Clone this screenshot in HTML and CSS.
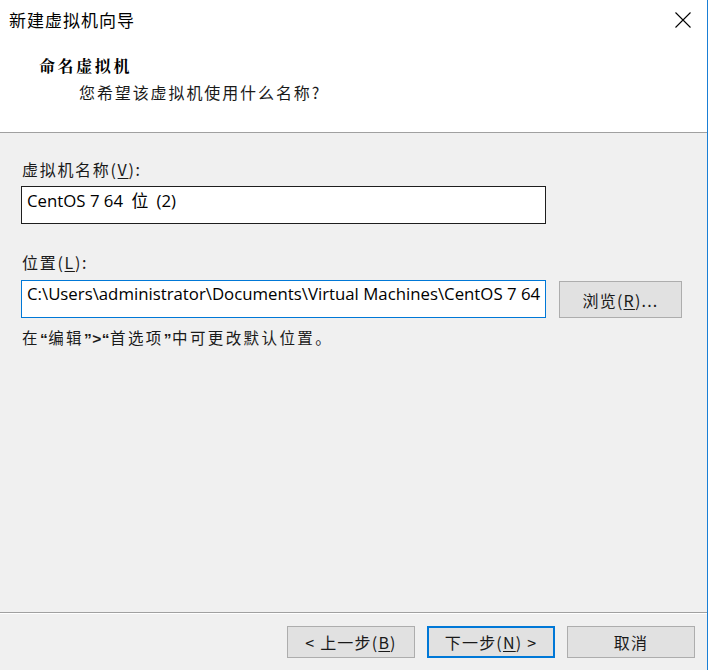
FILE: index.html
```html
<!DOCTYPE html>
<html lang="zh-CN">
<head>
<meta charset="utf-8">
<title>新建虚拟机向导</title>
<link rel="stylesheet" href="styles.css">
</head>
<body>
<div class="window">
  <div class="header">
    <div class="titlebar">
      <span class="title">新建虚拟机向导</span>
      <span class="close">
        <svg width="16" height="16" viewBox="0 0 16 16"><path d="M0.5 0.5 L15.5 15.5 M15.5 0.5 L0.5 15.5" stroke="#000" stroke-width="1.1" fill="none"/></svg>
      </span>
    </div>
    <div class="heading">命名虚拟机</div>
    <div class="subheading">您希望该虚拟机使用什么名称?</div>
  </div>
  <div class="content">
    <div class="label">虚拟机名称(<u>V</u>):</div>
    <div class="field">CentOS 7 64 <span class="cjk">位</span> (2)</div>
    <div class="label label2">位置(<u>L</u>):</div>
    <div class="row">
      <div class="field focus">C:\Users\administrator\Documents\Virtual Machines\CentOS 7 64</div>
      <div class="btn browse">浏览(<u>R</u>)...</div>
    </div>
    <div class="hint">在<span class="q">“</span>编辑<span class="q">”&gt;“</span>首选项<span class="q">”</span>中可更改默认位置。</div>
  </div>
  <div class="footer">
    <div class="btn nav">&lt; 上一步(<u>B</u>)</div>
    <div class="btn nav primary">下一步(<u>N</u>) &gt;</div>
    <div class="btn nav">取消</div>
  </div>
</div>
</body>
</html>
```
FILE: styles.css
```css
html, body {
  margin: 0;
  padding: 0;
  background: #ffffff;
}
body {
  width: 709px;
  height: 670px;
  overflow: hidden;
  font-family: "Noto Sans CJK SC", "Noto Sans", sans-serif;
  color: #000;
}
.window {
  width: 707px;
  height: 670px;
  border-right: 1px solid #1a7fd6;
  background: #f0f0f0;
  display: flex;
  flex-direction: column;
}
.header {
  background: #fff;
  border-bottom: 1px solid #a0a0a0;
  box-sizing: border-box;
  height: 133px;
}
.titlebar {
  height: 40px;
  display: flex;
  align-items: center;
  justify-content: space-between;
  padding-left: 9px;
  padding-right: 16px;
}
.title {
  font-size: 17px;
  letter-spacing: 1px;
  line-height: 20px;
}
.close {
  display: flex;
  width: 16px;
  height: 16px;
}
.heading {
  margin-top: 15px;
  padding-left: 39px;
  font-size: 16px;
  font-weight: bold;
  letter-spacing: 2.6px;
  line-height: 22px;
  font-family: "Noto Serif CJK SC", "Noto Sans CJK SC", serif;
}
.subheading {
  margin-top: 4px;
  padding-left: 79px;
  font-size: 16px;
  letter-spacing: 1.9px;
  line-height: 22px;
  color: #1a1a1a;
}
.content {
  flex: 1;
  padding-left: 21px;
  padding-top: 24px;
  border-bottom: 1px solid #a0a0a0;
  box-shadow: 0 1px 0 #ffffff;
}
.label {
  font-size: 16px;
  letter-spacing: 1.7px;
  line-height: 24px;
  padding-left: 1px;
  color: #1a1a1a;
}
.label2 {
  margin-top: 26px;
}
.field {
  margin-top: 5px;
  width: 525px;
  height: 38px;
  box-sizing: border-box;
  border: 1px solid #1e1e1e;
  background: #fff;
  font-family: "Open Sans", "Noto Sans CJK SC", sans-serif;
  font-size: 16.8px;
  line-height: 26px;
  padding-left: 5px;
  white-space: nowrap;
  overflow: hidden;
  letter-spacing: 0;
}
.cjk {
  font-family: "Noto Sans CJK SC", sans-serif;
  margin: 0 4px;
}
.focus {
  border-color: #0078d7;
  margin-top: 6px;
}
.row {
  display: flex;
  align-items: flex-start;
}
.btn {
  box-sizing: border-box;
  background: #e1e1e1;
  border: 1px solid #adadad;
  display: flex;
  align-items: center;
  justify-content: center;
  font-size: 16px;
  letter-spacing: 1.2px;
  color: #1a1a1a;
}
.browse {
  margin-top: 7px;
  margin-left: 13px;
  width: 123px;
  height: 37px;
}
.hint {
  margin-top: 7px;
  font-size: 15.5px;
  letter-spacing: 2.4px;
  line-height: 24px;
  padding-left: 1px;
  color: #1a1a1a;
}
.q {
  font-family: "Liberation Sans", sans-serif;
  font-weight: bold;
  letter-spacing: 0.5px;
}
.footer {
  height: 57px;
  box-sizing: border-box;
  display: flex;
  justify-content: flex-end;
  gap: 12px;
  padding-top: 13px;
  padding-right: 12px;
}
.nav {
  width: 128px;
  height: 32px;
}
.primary {
  border: 2px solid #0078d7;
}
u {
  text-decoration: underline;
  text-underline-offset: 2px;
}
```
